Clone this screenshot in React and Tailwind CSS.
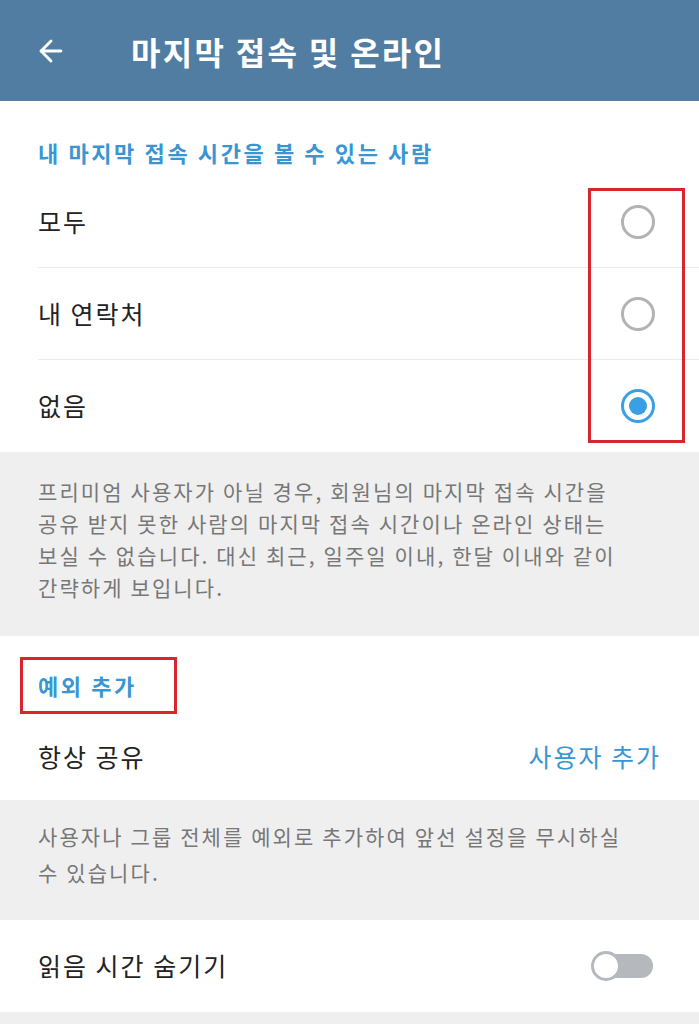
import { ArrowLeft } from "lucide-react";

const FONT = { fontFamily: '"Noto Sans CJK KR", "Noto Sans", sans-serif' };

function Radio({ checked }) {
    return checked ? (
        <div className="w-[34px] h-[34px] rounded-full border-[3px] border-[#3b9fe3] flex items-center justify-center">
            <div className="w-[18px] h-[18px] rounded-full bg-[#3b9fe3]" />
        </div>
    ) : (
        <div className="w-[34px] h-[34px] rounded-full border-[3px] border-[#b3b3b3]" />
    );
}

const OPTIONS = [
    { label: "모두", checked: false },
    { label: "내 연락처", checked: false },
    { label: "없음", checked: true },
];

export default function App() {
    return (
        <div className="w-[699px] h-[1024px] overflow-hidden bg-[#efefef]" style={FONT}>
            <div className="h-[101px] bg-[#517da2] flex items-center px-[34px]">
                <ArrowLeft className="w-[34px] h-[34px] text-white" strokeWidth={2} />
                <h1 className="ml-[63px] text-[32px] font-bold text-white tracking-[2.3px]">마지막 접속 및 온라인</h1>
            </div>
            <div className="h-[3px] bg-gradient-to-b from-[#d8e2ea] to-[#efefef]" />

            <div className="bg-white -mt-[3px]">
                <div className="pt-[35px] pb-[7px] px-[38px] text-[22px] font-bold text-[#3a96d3] tracking-[2.6px]">
                    내 마지막 접속 시간을 볼 수 있는 사람
                </div>
                <div className="relative">
                    {OPTIONS.map((o, i) => (
                        <div key={o.label} className="pl-[38px]">
                            <div className={`h-[92px] flex items-center justify-between pr-[44px] ${i < OPTIONS.length - 1 ? "border-b border-[#ebebeb]" : ""}`}>
                                <span className="text-[25px] text-[#222] tracking-[2px]">{o.label}</span>
                                <Radio checked={o.checked} />
                            </div>
                        </div>
                    ))}
                    <div className="absolute left-[588px] top-[12px] w-[97px] h-[255px] border-[3px] border-[#d8262e]" />
                </div>
            </div>

            <div className="px-[38px] pt-[23px] pb-[33px] text-[21px] leading-[32px] text-[#777] tracking-[2.1px] whitespace-nowrap">
                프리미엄 사용자가 아닐 경우, 회원님의 마지막 접속 시간을<br />
                공유 받지 못한 사람의 마지막 접속 시간이나 온라인 상태는<br />
                보실 수 없습니다. 대신 최근, 일주일 이내, 한달 이내와 같이<br />
                간략하게 보입니다.
            </div>

            <div className="bg-white">
                <div className="px-[20px] pt-[21px]">
                    <div className="w-[157px] border-[3px] border-[#d8262e] pl-[15px] h-[57px] leading-[51px] text-[22px] font-bold text-[#3a96d3] tracking-[2.6px]">
                        예외 추가
                    </div>
                </div>
                <div className="h-[86px] px-[38px] flex items-center justify-between">
                    <span className="text-[25px] text-[#222] tracking-[2px]">항상 공유</span>
                    <span className="text-[25px] text-[#3a96d3] tracking-[2px]">사용자 추가</span>
                </div>
            </div>

            <div className="px-[38px] pt-[18px] pb-[30px] text-[21px] leading-[36px] text-[#777] tracking-[2.1px] whitespace-nowrap">
                사용자나 그룹 전체를 예외로 추가하여 앞선 설정을 무시하실<br />
                수 있습니다.
            </div>

            <div className="bg-white h-[92px] px-[38px] flex items-center justify-between">
                <span className="text-[25px] text-[#222] tracking-[2px]">읽음 시간 숨기기</span>
                <div className="relative w-[62px] h-[30px] mr-[8px] flex items-center">
                    <div className="absolute right-0 w-[50px] h-[24px] rounded-full bg-[#b5b8bc]" />
                    <div className="absolute left-0 w-[30px] h-[30px] rounded-full bg-white border-[3px] border-[#b5b8bc]" />
                </div>
            </div>
        </div>
    );
}
